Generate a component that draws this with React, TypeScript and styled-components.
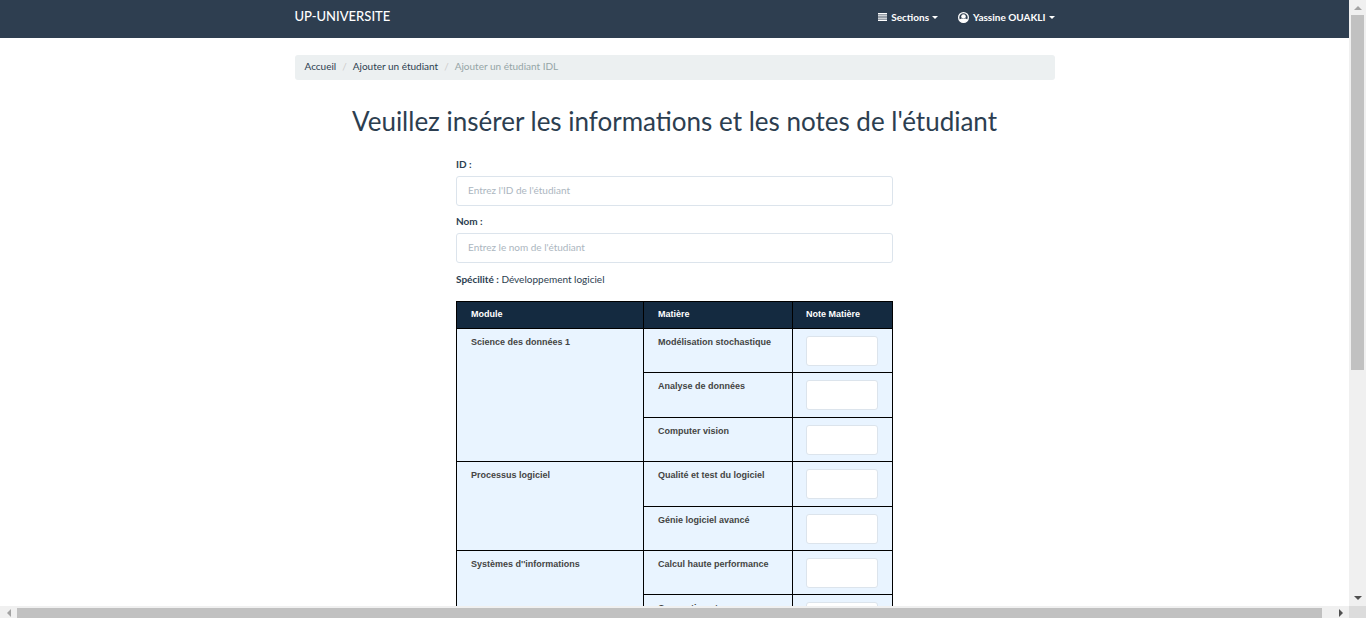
import React from "react";
import styled, { createGlobalStyle } from "styled-components";

const GlobalStyle = createGlobalStyle`
  * { box-sizing: border-box; }
  body {
    margin: 0;
    background: #fff;
    color: #2c3e50;
    font-family: Lato, "Liberation Sans", sans-serif;
    font-size: 10px;
    line-height: 15px;
  }
  input, button { font: inherit; }
`;

const Frame = styled.div`
  display: grid;
  grid-template-columns: minmax(0, 1fr) 17px;
  grid-template-rows: minmax(0, 1fr) 12px;
  height: 100vh;
`;

const Viewport = styled.div`
  overflow: hidden;
`;

const Container = styled.div`
  width: 100%;
  max-width: 760px;
  margin: 0 auto;
`;

const Navbar = styled.header`
  background: #2e3e50;
`;

const NavInner = styled(Container)`
  display: flex;
  align-items: center;
  justify-content: space-between;
  height: 38px;
  padding-bottom: 4px;
`;

const Brand = styled.a`
  padding-bottom: 2px;
  color: #fff;
  font-size: 13px;
  font-weight: 500;
  text-decoration: none;
`;

const NavMenu = styled.nav`
  display: flex;
  gap: 20px;
`;

const NavButton = styled.button`
  display: flex;
  align-items: center;
  gap: 4px;
  padding: 0;
  border: 0;
  background: none;
  color: #fff;
  font-weight: 700;
`;

const Caret = styled.span`
  width: 0;
  border: 3px solid transparent;
  border-top-color: currentColor;
  border-bottom: 0;
  margin-left: -1px;
`;

const Breadcrumb = styled.ol`
  display: flex;
  margin: 17px 0 0;
  padding: 4px 10px 6px;
  border-radius: 3px;
  background: #ecf0f1;
  list-style: none;
`;

const Crumb = styled.li`
  color: #95a5a6;
  & + &::before {
    content: "/";
    padding: 0 6px;
    color: #ccc;
  }
  a {
    color: #2c3e50;
    text-decoration: none;
  }
`;

const Title = styled.h1`
  margin: 25px 0 20px;
  font-size: 26px;
  font-weight: 400;
  line-height: 32px;
  text-align: center;
`;

const Form = styled.form`
  max-width: 437px;
  margin: 0 auto;
`;

const Field = styled.div`
  margin-bottom: 8px;
`;

const Label = styled.label`
  display: block;
  margin-bottom: 4px;
  font-weight: 700;
`;

const TextInput = styled.input`
  display: block;
  width: 100%;
  height: 30px;
  padding: 0 11px 2px;
  border: 1px solid #dce4ec;
  border-radius: 3px;
  background: #fff;
  color: #2c3e50;
  &::placeholder { color: #acb6c0; opacity: 1; }
`;

const Speciality = styled.p`
  margin: 9px 0 14px;
`;

const Grades = styled.table`
  width: 100%;
  border-collapse: collapse;
  table-layout: fixed;
  font-family: "Liberation Sans", Arial, sans-serif;
  font-size: 9px;
  font-weight: 700;
  line-height: 12px;
  text-align: left;
`;

const HeadCell = styled.th<{ $width?: number }>`
  width: ${(p) => (p.$width ? `${p.$width}px` : "auto")};
  height: 27px;
  padding: 0 14px 2px;
  border: 1px solid #000;
  background: #142a40;
  color: #fff;
  &:last-child { padding-left: 13px; }
`;

const Cell = styled.td<{ $height?: number }>`
  height: ${(p) => p.$height ?? 44}px;
  padding: 7px 14px 6px;
  border: 1px solid #000;
  background: #e9f4ff;
  color: #444;
  vertical-align: top;
  &:last-child { padding-left: 13px; }
`;

const ScrollTrack = styled.div<{ $vertical?: boolean }>`
  display: flex;
  flex-direction: ${(p) => (p.$vertical ? "column" : "row")};
  align-items: stretch;
  background: #f0f0f0;
  padding: ${(p) => (p.$vertical ? "0 2px" : "2px 0 0")};
`;

const ScrollEnd = styled.div<{ $size: number }>`
  flex: 0 0 ${(p) => p.$size}px;
  display: flex;
  align-items: center;
  justify-content: center;
`;

const ScrollThumb = styled.div<{ $share: number }>`
  flex: ${(p) => p.$share} 1 0;
  background: #c1c1c1;
`;

const ScrollSpace = styled.div<{ $share: number }>`
  flex: ${(p) => p.$share} 1 0;
`;

const Corner = styled.div`
  background: #dcdcdc;
`;

const modules = [
  {
    name: "Science des données 1",
    height: 133,
    subjects: ["Modélisation stochastique", "Analyse de données", "Computer vision"],
  },
  {
    name: "Processus logiciel",
    height: 89,
    subjects: ["Qualité et test du logiciel", "Génie logiciel avancé"],
  },
  {
    name: "Systèmes d''informations",
    height: 88,
    subjects: ["Calcul haute performance", "Conception et"],
  },
];

const ListIcon = () => (
  <svg width="9" height="8" viewBox="0 0 9 8" fill="#fff" aria-hidden="true">
    <path d="M0 0h9v1.400H0zM0 2.200h9v1.400H0zM0 4.400h9v1.400H0zM0 6.600h9v1.400H0z" />
  </svg>
);

const UserIcon = () => (
  <svg width="11" height="11" viewBox="0 0 22 22" aria-hidden="true">
    <circle cx="11" cy="11" r="9.700" fill="none" stroke="#fff" strokeWidth="2.600" />
    <circle cx="11" cy="9" r="4.600" fill="#fff" />
    <path d="M2.800 16c1-2 2.600-3 4.400-3.200 2.200 1.800 5.400 1.800 7.600 0 1.800.2 3.400 1.200 4.400 3.200-3.600 6.400-12.800 6.400-16.400 0z" fill="#fff" />
  </svg>
);

const Arrow = ({ points, color }: { points: string; color: string }) => (
  <svg width="8" height="8" viewBox="0 0 8 8" fill={color} aria-hidden="true">
    <polygon points={points} />
  </svg>
);

export default function App() {
  return (
    <>
      <GlobalStyle />
      <Frame>
        <Viewport>
          <Navbar>
            <NavInner>
              <Brand href="#">UP-UNIVERSITE</Brand>
              <NavMenu>
                <NavButton type="button">
                  <ListIcon />
                  Sections
                  <Caret />
                </NavButton>
                <NavButton type="button">
                  <UserIcon />
                  Yassine OUAKLI
                  <Caret />
                </NavButton>
              </NavMenu>
            </NavInner>
          </Navbar>
          <Container as="main">
            <Breadcrumb>
              <Crumb><a href="#">Accueil</a></Crumb>
              <Crumb><a href="#">Ajouter un étudiant</a></Crumb>
              <Crumb>Ajouter un étudiant IDL</Crumb>
            </Breadcrumb>
            <Title>Veuillez insérer les informations et les notes de l'étudiant</Title>
            <Form>
              <Field>
                <Label htmlFor="id">ID :</Label>
                <TextInput id="id" placeholder="Entrez l'ID de l'étudiant" />
              </Field>
              <Field>
                <Label htmlFor="nom">Nom :</Label>
                <TextInput id="nom" placeholder="Entrez le nom de l'étudiant" />
              </Field>
              <Speciality><strong>Spécilité :</strong> Développement logiciel</Speciality>
              <Grades>
                <thead>
                  <tr>
                    <HeadCell>Module</HeadCell>
                    <HeadCell $width={149}>Matière</HeadCell>
                    <HeadCell $width={100}>Note Matière</HeadCell>
                  </tr>
                </thead>
                <tbody>
                  {modules.map((m) =>
                    m.subjects.map((subject, i) => (
                      <tr key={subject}>
                        {i === 0 && (
                          <Cell rowSpan={m.subjects.length} $height={m.height}>
                            {m.name}
                          </Cell>
                        )}
                        <Cell>{subject}</Cell>
                        <Cell>
                          <TextInput aria-label={subject} />
                        </Cell>
                      </tr>
                    ))
                  )}
                </tbody>
              </Grades>
            </Form>
          </Container>
        </Viewport>
        <ScrollTrack $vertical>
          <ScrollEnd $size={15}><Arrow points="4,2 8,6 0,6" color="#a3a3a3" /></ScrollEnd>
          <ScrollThumb $share={355} />
          <ScrollSpace $share={219} />
          <ScrollEnd $size={17}><Arrow points="0,2 8,2 4,6" color="#505050" /></ScrollEnd>
        </ScrollTrack>
        <ScrollTrack>
          <ScrollEnd $size={17}><Arrow points="6,0 6,8 2,4" color="#a3a3a3" /></ScrollEnd>
          <ScrollThumb $share={1305} />
          <ScrollSpace $share={10} />
          <ScrollEnd $size={17}><Arrow points="2,0 6,4 2,8" color="#505050" /></ScrollEnd>
        </ScrollTrack>
        <Corner />
      </Frame>
    </>
  );
}
